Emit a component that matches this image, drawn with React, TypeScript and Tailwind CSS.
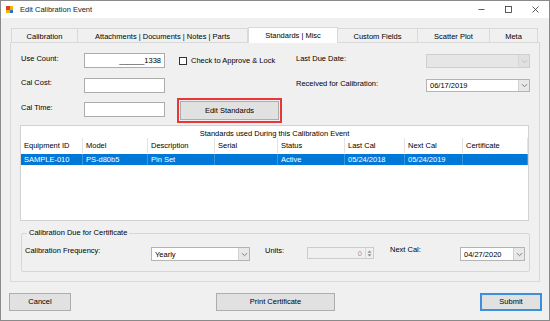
import React from 'react';

const tabs = [
  { label: 'Calibration', w: 'w-[67px]' },
  { label: 'Attachments | Documents | Notes | Parts', w: 'w-[170px]' },
  { label: 'Standards | Misc', w: 'w-[90px]', active: true },
  { label: 'Custom Fields', w: 'w-[80px]' },
  { label: 'Scatter Plot', w: 'w-[72px]' },
  { label: 'Meta', w: 'w-[48px]' },
];

const columns = [
  { label: 'Equipment ID', w: 'w-[62px]', value: 'SAMPLE-010' },
  { label: 'Model', w: 'w-[65px]', value: 'PS-d80b5' },
  { label: 'Description', w: 'w-[67px]', value: 'Pin Set' },
  { label: 'Serial', w: 'w-[63px]', value: '' },
  { label: 'Status', w: 'w-[67px]', value: 'Active' },
  { label: 'Last Cal', w: 'w-[60px]', value: '05/24/2018' },
  { label: 'Next Cal', w: 'w-[58px]', value: '05/24/2019' },
  { label: 'Certificate', w: 'w-[65px]', value: '' },
];

function Chevron({ disabled }: { disabled?: boolean }) {
  return (
    <svg width="7" height="5" viewBox="0 0 7 5">
      <path d="M1 1.2 L3.5 3.7 L6 1.2" fill="none" stroke={disabled ? '#b8b8b8' : '#707070'} strokeWidth="0.9" />
    </svg>
  );
}

function Combo({ value, w, h = 'h-[14px]', disabled }: { value?: string; w: string; h?: string; disabled?: boolean }) {
  return (
    <div
      className={`${w} ${h} flex border ${
        disabled ? 'border-[#cfcfcf] bg-[#e6e6e6]' : 'border-[#b4b4b4] bg-white'
      }`}
    >
      <div className="flex-1 flex items-center pl-[3px] pt-[1px]">{value}</div>
      <div
        className={`w-[11px] flex items-center justify-center border-l ${
          disabled ? 'border-[#d6d6d6] bg-[#e0e0e0]' : 'border-[#d0d0d0] bg-[#e8e8e8]'
        }`}
      >
        <Chevron disabled={disabled} />
      </div>
    </div>
  );
}

function TextBox({ value, h = 'h-[15px]' }: { value?: string; h?: string }) {
  return (
    <div className={`w-[81px] ${h} bg-white border border-[#acacac] flex items-center justify-end pr-[3px] pt-[1px]`}>
      {value}
    </div>
  );
}

function Button({ label, w, focused }: { label: string; w: string; focused?: boolean }) {
  return (
    <div
      className={`${w} h-[18px] bg-[#e1e1e1] flex items-center justify-center ${
        focused ? 'border-2 border-[#3b8fdb]' : 'border border-[#adadad]'
      }`}
    >
      {label}
    </div>
  );
}

export default function App() {
  return (
    <div className="w-[550px] h-[321px] bg-[#f0f0f0] border border-[#8a8a8a] flex flex-col overflow-hidden text-[7.5px] leading-none text-black font-['Liberation_Sans',Arial,sans-serif]">
      {/* Title bar */}
      <div className="h-[17px] bg-white flex items-center shrink-0">
        <div className="ml-[5px] w-[7px] h-[7px] grid grid-cols-2 grid-rows-2">
          <div className="bg-[#d9412b]" />
          <div className="bg-[#f2b400]" />
          <div className="bg-[#f2b400]" />
          <div className="bg-[#2f6fd0]" />
        </div>
        <div className="ml-[7px] pt-[1px] text-[#222]">Edit Calibration Event</div>
        <div className="ml-auto flex h-full">
          <div className="w-[27px] flex items-center justify-center">
            <svg width="7" height="7" viewBox="0 0 7 7">
              <path d="M0.5 3.5 H6.5" stroke="#333" strokeWidth="0.8" />
            </svg>
          </div>
          <div className="w-[27px] flex items-center justify-center">
            <svg width="7" height="7" viewBox="0 0 7 7">
              <rect x="0.5" y="0.5" width="6" height="6" fill="none" stroke="#333" strokeWidth="0.8" />
            </svg>
          </div>
          <div className="w-[27px] flex items-center justify-center">
            <svg width="7" height="7" viewBox="0 0 7 7">
              <path d="M0.5 0.5 L6.5 6.5 M6.5 0.5 L0.5 6.5" stroke="#333" strokeWidth="0.8" />
            </svg>
          </div>
        </div>
      </div>

      {/* Tab strip */}
      <div className="mt-[9px] ml-[10px] h-[15px] flex items-end">
        {tabs.map((t) =>
          t.active ? (
            <div
              key={t.label}
              className={`${t.w} h-[16px] -mb-[1px] relative z-10 bg-white border border-b-0 border-[#d9d9d9] flex items-center justify-center`}
            >
              {t.label}
            </div>
          ) : (
            <div
              key={t.label}
              className={`${t.w} h-[14px] border border-b-0 border-l-0 first:border-l border-[#d9d9d9] bg-[#f0f0f0] flex items-center justify-center pt-[2px]`}
            >
              {t.label}
            </div>
          )
        )}
      </div>

      {/* Tab page */}
      <div className="ml-[9px] w-[530px] h-[240px] border border-[#d9d9d9] flex flex-col">
        <div className="flex pl-[10px]">
          {/* Left column */}
          <div className="w-[275px] flex flex-col">
            <div className="mt-[10px] flex items-start">
              <div className="w-[63px] mt-[2px]">Use Count:</div>
              <TextBox value="______1338" />
              <div className="ml-[14px] mt-[4px] w-[8px] h-[8px] bg-white border border-[#333]" />
              <div className="ml-[4px] mt-[4px]">Check to Approve &amp; Lock</div>
            </div>
            <div className="mt-[10px] flex items-start">
              <div className="w-[63px] mt-[1px]">Cal Cost:</div>
              <TextBox />
            </div>
            <div className="mt-[5px] flex items-start">
              <div className="w-[63px] mt-[6px]">Cal Time:</div>
              <div className="mt-[4px]">
                <TextBox />
              </div>
              <div className="ml-[12px] w-[105px] h-[25px] border-2 border-[#e8373b] p-[1px]">
                <div className="w-full h-full bg-[#e1e1e1] border border-[#adadad] flex items-center justify-center pt-[1px]">
                  Edit Standards
                </div>
              </div>
            </div>
          </div>

          {/* Right column */}
          <div className="flex flex-col">
            <div className="mt-[11px] flex items-start">
              <div className="w-[130px] mt-[1px]">Last Due Date:</div>
              <Combo w="w-[104px]" disabled />
            </div>
            <div className="mt-[11px] flex items-start">
              <div className="w-[130px] mt-[1px]">Received for Calibration:</div>
              <Combo w="w-[104px]" h="h-[13px]" value="06/17/2019" />
            </div>
          </div>
        </div>

        {/* Standards list */}
        <div className="mt-[2px] ml-[9px] w-[509px] h-[96px] bg-white border border-[#d2d2d2] flex flex-col">
          <div className="h-[12px] pt-[4px] text-center">Standards used During this Calibration Event</div>
          <div className="h-[15px] flex">
            {columns.map((c) => (
              <div key={c.label} className={`${c.w} border-r border-[#e3e3e3] flex items-center pl-[3px] pt-[1px]`}>
                {c.label}
              </div>
            ))}
          </div>
          <div className="mt-[1px] h-[11px] flex bg-[#0078d7] text-white">
            {columns.map((c) => (
              <div key={c.label} className={`${c.w} border-r border-[#3a95e0] flex items-center pl-[3px] pt-[1px]`}>
                {c.value}
              </div>
            ))}
          </div>
        </div>

        {/* Group box */}
        <fieldset className="mt-[8px] ml-[10px] w-[509px] h-[43px] border border-[#d6d6d6] rounded-[2px] px-[3px]">
          <legend className="ml-[2px] px-[2px] leading-[8px]">Calibration Due for Certificate</legend>
          <div className="mt-[10px] flex items-start">
            <div className="w-[126px]">Calibration Frequency:</div>
            <Combo w="w-[99px]" value="Yearly" />
            <div className="ml-[15px] w-[42px]">Units:</div>
            <div className="w-[67px] h-[12px] border border-[#cccccc] bg-[#f0f0f0] flex items-center justify-end">
              <span className="text-[#9a9a9a] pt-[1px] mr-[3px]">0</span>
              <div className="w-[8px] h-full border-l border-[#d6d6d6] flex flex-col items-center justify-center gap-[1px]">
                <svg width="5" height="3" viewBox="0 0 5 3">
                  <path d="M0.5 2.7 L2.5 0.5 L4.5 2.7 Z" fill="#8a8a8a" />
                </svg>
                <svg width="5" height="3" viewBox="0 0 5 3">
                  <path d="M0.5 0.3 L2.5 2.5 L4.5 0.3 Z" fill="#8a8a8a" />
                </svg>
              </div>
            </div>
            <div className="ml-[16px] w-[70px] -mt-[1px]">Next Cal:</div>
            <Combo w="w-[65px]" value="04/27/2020" />
          </div>
        </fieldset>
      </div>

      {/* Dialog buttons */}
      <div className="mt-[11px] pl-[8px] pr-[7px] flex justify-between">
        <Button label="Cancel" w="w-[62px]" />
        <Button label="Print Certificate" w="w-[119px]" />
        <Button label="Submit" w="w-[62px]" focused />
      </div>
    </div>
  );
}
